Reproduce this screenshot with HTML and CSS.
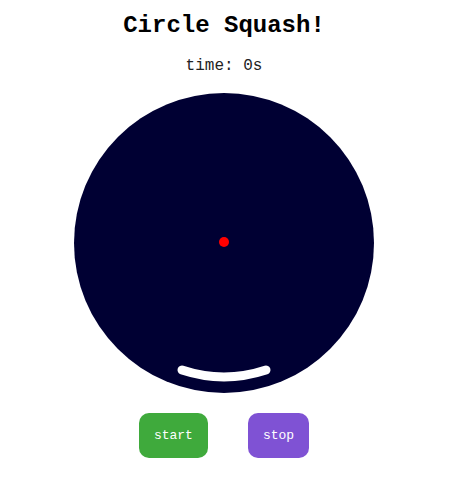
FILE: index.html
```html
<!DOCTYPE html>
<html>
<head>
<meta charset="utf-8">
<link rel="stylesheet" href="styles.css">
</head>
<body>
<div class="wrap">
  <h1 class="title">Circle Squash!</h1>
  <p class="timer">time: 0s</p>
  <svg class="arena" width="300" height="300" viewBox="0 0 300 300">
    <circle cx="150" cy="150" r="150" fill="#000033"/>
    <circle cx="150" cy="149" r="5" fill="#ff0000"/>
    <path d="M108 277 A134 134 0 0 0 192 277" fill="none" stroke="#ffffff" stroke-width="9" stroke-linecap="round"/>
  </svg>
  <div class="controls">
    <button class="btn btn-start">start</button>
    <button class="btn btn-stop">stop</button>
  </div>
</div>
</body>
</html>
```
FILE: styles.css
```css
html, body {
  margin: 0;
  padding: 0;
  background: #ffffff;
}
.wrap {
  width: 448px;
  padding-top: 12px;
  display: flex;
  flex-direction: column;
  align-items: center;
  font-family: "Liberation Mono", "Courier New", monospace;
}
.title {
  margin: 0;
  font-size: 24px;
  line-height: 28px;
  font-weight: bold;
  color: #000;
}
.timer {
  margin: 16px 0 0;
  font-size: 16px;
  line-height: 20px;
  color: #222;
}
.arena {
  display: block;
  margin-top: 17px;
}
.controls {
  margin-top: 20px;
  display: flex;
  gap: 40px;
}
.btn {
  height: 45px;
  padding: 0 15px;
  border: none;
  border-radius: 10px;
  font-family: "Liberation Mono", "Courier New", monospace;
  font-size: 13px;
  color: #ffffff;
  display: flex;
  align-items: center;
  justify-content: center;
}
.btn-start {
  background: #3faa3c;
}
.btn-stop {
  background: #7f52d4;
}
```
